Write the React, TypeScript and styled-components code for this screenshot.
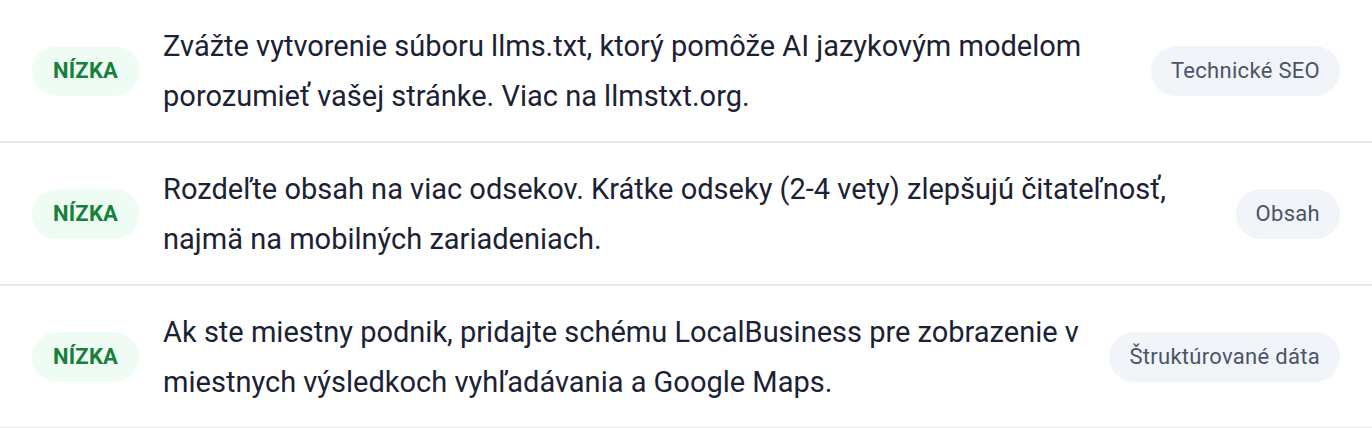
import React from 'react';
import styled, { createGlobalStyle } from 'styled-components';

const GlobalStyle = createGlobalStyle`
    html, body {
        margin: 0;
        padding: 0;
        background: #ffffff;
    }
    body {
        font-family: Roboto, 'Liberation Sans', sans-serif;
    }
`;

type Item = {
    priority: string;
    text: string;
    tag: string;
};

const items: Item[] = [
    {
        priority: 'NÍZKA',
        text: 'Zvážte vytvorenie súboru llms.txt, ktorý pomôže AI jazykovým modelom porozumieť vašej stránke. Viac na llmstxt.org.',
        tag: 'Technické SEO',
    },
    {
        priority: 'NÍZKA',
        text: 'Rozdeľte obsah na viac odsekov. Krátke odseky (2-4 vety) zlepšujú čitateľnosť, najmä na mobilných zariadeniach.',
        tag: 'Obsah',
    },
    {
        priority: 'NÍZKA',
        text: 'Ak ste miestny podnik, pridajte schému LocalBusiness pre zobrazenie v miestnych výsledkoch vyhľadávania a Google Maps.',
        tag: 'Štruktúrované dáta',
    },
];

export const App = () => {
    return (
        <>
            <GlobalStyle />
            <List>
                {items.map((item, i) => (
                    <Row key={i}>
                        <PriorityBadge>{item.priority}</PriorityBadge>
                        <Message>{item.text}</Message>
                        <Tag>{item.tag}</Tag>
                    </Row>
                ))}
            </List>
        </>
    );
};

const List = styled.div`
    display: flex;
    flex-direction: column;
    width: 1372px;
`;

const Row = styled.div`
    display: flex;
    align-items: center;
    gap: 24px;
    height: 141px;
    padding: 0 32px;
    border-bottom: 2px solid #e5e8ee;
    box-sizing: content-box;
`;

const PriorityBadge = styled.span`
    flex-shrink: 0;
    display: inline-flex;
    align-items: center;
    justify-content: center;
    height: 50px;
    padding: 0 21px;
    border-radius: 25px;
    background: #effcf3;
    color: #17803d;
    font-size: 22px;
    font-weight: 700;
    letter-spacing: 0.2px;
`;

const Message = styled.p`
    flex: 1;
    margin: 0;
    color: #1a2234;
    font-size: 29px;
    line-height: 50px;
`;

const Tag = styled.span`
    flex-shrink: 0;
    display: inline-flex;
    align-items: center;
    height: 50px;
    padding: 0 20px;
    border-radius: 25px;
    background: #f1f4f8;
    color: #4a5568;
    font-size: 22px;
    letter-spacing: 0.3px;
`;

export default App;
